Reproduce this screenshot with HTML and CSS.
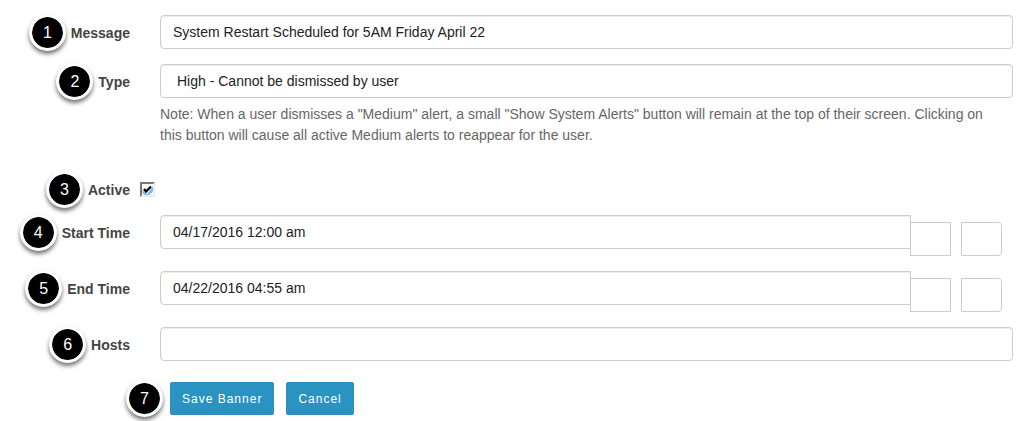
FILE: index.html
```html
<!DOCTYPE html>
<html lang="en">
<head>
<meta charset="utf-8">
<title>System Alert Banner</title>
<link rel="stylesheet" href="styles.css">
</head>
<body>
<form class="banner-form">
  <div class="row">
    <div class="caption"><span class="step">1</span><label for="message">Message</label></div>
    <input class="control" id="message" type="text" value="System Restart Scheduled for 5AM Friday April 22">
  </div>
  <div class="row row-type">
    <div class="caption"><span class="step">2</span><label for="type">Type</label></div>
    <div class="field">
      <select class="control" id="type" aria-describedby="type-note">
        <option>High - Cannot be dismissed by user</option>
      </select>
      <p class="note" id="type-note">Note: When a user dismisses a "Medium" alert, a small "Show System Alerts" button will remain at the top of their screen. Clicking on this button will cause all active Medium alerts to reappear for the user.</p>
    </div>
  </div>
  <div class="row row-check">
    <div class="caption"><span class="step">3</span><label for="active">Active</label></div>
    <input class="check" id="active" type="checkbox" checked>
  </div>
  <div class="row">
    <div class="caption"><span class="step">4</span><label for="start">Start Time</label></div>
    <div class="date-group">
      <input class="control" id="start" type="text" value="04/17/2016 12:00 am">
      <button class="addon" type="button" aria-label="Clear start time"></button>
      <button class="addon addon-last" type="button" aria-label="Pick start time"></button>
    </div>
  </div>
  <div class="row">
    <div class="caption"><span class="step">5</span><label for="end">End Time</label></div>
    <div class="date-group">
      <input class="control" id="end" type="text" value="04/22/2016 04:55 am">
      <button class="addon" type="button" aria-label="Clear end time"></button>
      <button class="addon addon-last" type="button" aria-label="Pick end time"></button>
    </div>
  </div>
  <div class="row">
    <div class="caption"><span class="step">6</span><label for="hosts">Hosts</label></div>
    <input class="control" id="hosts" type="text">
  </div>
  <div class="actions">
    <span class="step">7</span>
    <button class="button" type="submit">Save Banner</button>
    <button class="button" type="button">Cancel</button>
  </div>
</form>
</body>
</html>
```

FILE: styles.css
```css
* {
  box-sizing: border-box;
}

body {
  margin: 0;
  background: #fff;
  color: #666;
  font: 14px/21px "Liberation Sans", Arial, sans-serif;
}

.banner-form {
  padding: 15px 17px 6px 0;
}

.row {
  display: grid;
  grid-template-columns: 130px minmax(0, 1fr);
  column-gap: 30px;
  align-items: start;
  margin-bottom: 15px;
}

.row-type {
  margin-bottom: 26px;
}

.row-check {
  column-gap: 10px;
  align-items: center;
  margin-bottom: 9px;
}

.caption {
  display: flex;
  align-items: center;
  justify-content: flex-end;
  gap: 5px;
  height: 34px;
  color: #444;
  font-weight: bold;
  white-space: nowrap;
}

.caption label {
  padding-top: 2px;
}

/* Numbered step markers */
.step {
  flex: none;
  width: 37px;
  height: 37px;
  border: 3px solid #fff;
  border-radius: 50%;
  background: #000;
  background-clip: padding-box;
  box-shadow: 0 3px 4px rgba(0, 0, 0, 0.55);
  color: #fff;
  font-size: 16px;
  font-weight: normal;
  line-height: 31px;
  text-align: center;
}

.control {
  display: block;
  width: 100%;
  height: 34px;
  margin: 0;
  padding: 0 12px;
  border: 1px solid #ccc;
  border-radius: 4px;
  background: #fff;
  box-shadow: inset 0 1px 1px rgba(0, 0, 0, 0.075);
  color: #222;
  font: inherit;
  appearance: none;
}

select.control {
  padding-left: 16px;
}

.note {
  margin: 6px 0 0;
  padding-right: 12px;
}

.check {
  width: 15px;
  height: 15px;
  margin: 0;
  border: 2px solid #ececec;
  border-top-color: #7b757b;
  border-left-color: #7b757b;
  background: #fff;
  appearance: none;
}

.check:checked {
  background: #fff url("data:image/svg+xml,%3Csvg xmlns='http://www.w3.org/2000/svg' viewBox='0 0 11 11'%3E%3Cpath d='M0 6L5 10L11 2V7Q9 11 6 11H3Q0 10 0 6Z' fill='%237dbcec'/%3E%3Cpath d='M2 5L4 7.500L9 2.500' fill='none' stroke='%23000' stroke-width='2.200'/%3E%3C/svg%3E") center / 11px 11px no-repeat;
}

.date-group {
  display: flex;
  align-items: flex-start;
  gap: 10px;
  padding-right: 11px;
}

.date-group .control {
  flex: 1;
  min-width: 0;
  margin-right: -11px;
  border-radius: 4px 0 0 4px;
}

.addon {
  flex: none;
  width: 41px;
  height: 34px;
  margin: 7px 0 0;
  padding: 0;
  border: 1px solid #ccc;
  background: #fff;
}

.addon-last {
  border-radius: 0 4px 4px 0;
}

.actions {
  display: flex;
  align-items: center;
  gap: 12px;
  margin-top: 19px;
  padding-left: 126px;
}

.actions .step {
  margin-right: -5px;
}

.button {
  height: 33px;
  padding: 0 11px;
  border: 1px solid #2b8dba;
  border-radius: 2px;
  background: #2a93c1;
  color: #fff;
  font: 12px "Liberation Sans", Arial, sans-serif;
  letter-spacing: 1px;
}
```
